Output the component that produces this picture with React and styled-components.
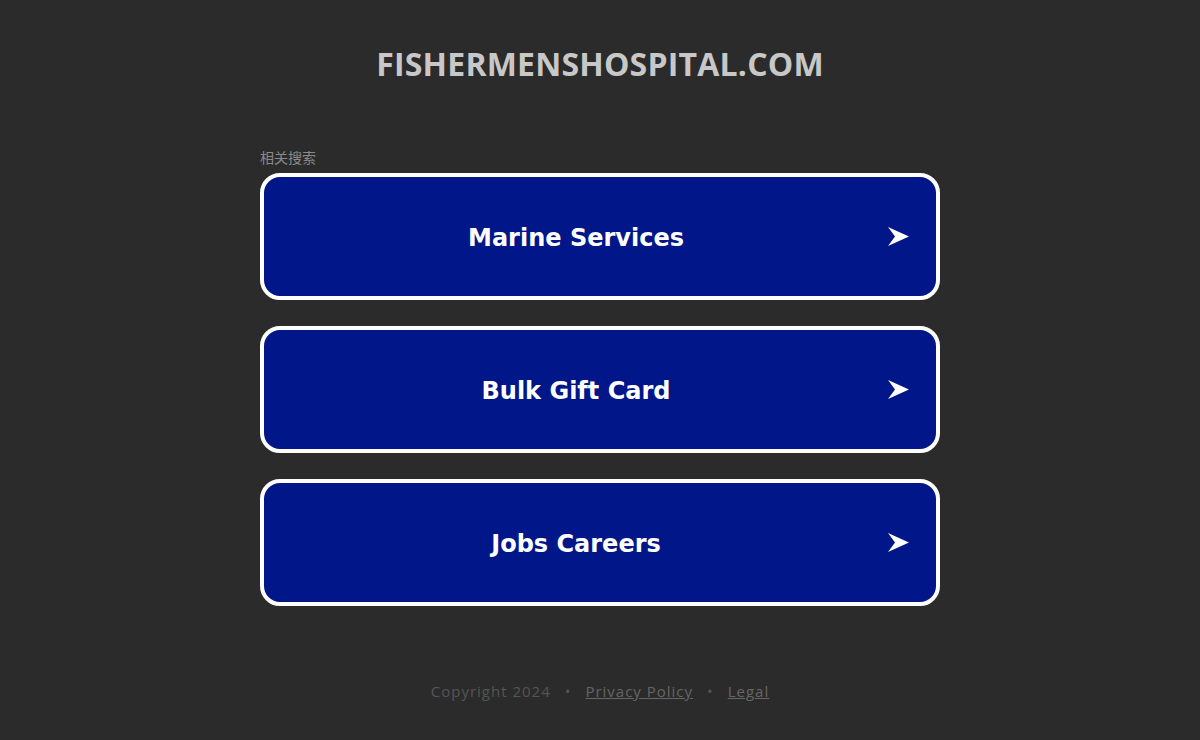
import React from "react";
import styled, { createGlobalStyle } from "styled-components";

const GlobalStyle = createGlobalStyle`
  html, body {
    margin: 0;
    padding: 0;
    background: #2b2b2b;
  }
`;

const Page = styled.div`
  width: 1200px;
  height: 740px;
  display: flex;
  flex-direction: column;
  align-items: center;
  box-sizing: border-box;
  padding-top: 43px;
`;

const Title = styled.h1`
  margin: 0;
  font-family: "Open Sans", sans-serif;
  font-weight: 700;
  font-size: 32px;
  line-height: 42px;
  color: #c8c8c8;
  letter-spacing: 0.2px;
`;

const Searches = styled.div`
  width: 680px;
  margin-top: 65px;
  display: flex;
  flex-direction: column;
`;

const Label = styled.div`
  font-family: "Liberation Sans", "Noto Sans CJK SC", sans-serif;
  font-size: 14px;
  line-height: 17px;
  color: #8a8a8a;
  margin-bottom: 6px;
`;

const Card = styled.a`
  display: flex;
  align-items: center;
  height: 127px;
  box-sizing: border-box;
  border: 4px solid #fff;
  border-radius: 20px;
  background: #011689;
  margin-bottom: 26px;
  padding-right: 26px;
  text-decoration: none;
  cursor: pointer;
`;

const CardText = styled.span`
  flex: 1;
  text-align: center;
  font-family: "DejaVu Sans", Verdana, sans-serif;
  font-weight: 700;
  font-size: 24px;
  line-height: 30px;
  padding-top: 2px;
  color: #fff;
`;

const Arrow = () => (
  <svg width="22" height="20" viewBox="0 0 22 20">
    <polygon points="0,0 21,9.5 0,19 7,9.5" fill="#fff" />
  </svg>
);

const Footer = styled.footer`
  margin-top: 49px;
  font-family: "Open Sans", sans-serif;
  font-size: 15px;
  letter-spacing: 1px;
  color: #555;
  display: flex;
  gap: 14px;
`;

const FooterLink = styled.a`
  color: #666;
  text-decoration: underline;
`;

const items = ["Marine Services", "Bulk Gift Card", "Jobs Careers"];

export default function App() {
  return (
    <>
      <GlobalStyle />
      <Page>
        <Title>FISHERMENSHOSPITAL.COM</Title>
        <Searches>
          <Label>相关搜索</Label>
          {items.map((item) => (
            <Card key={item}>
              <CardText>{item}</CardText>
              <Arrow />
            </Card>
          ))}
        </Searches>
        <Footer>
          <span>Copyright 2024</span>
          <span>•</span>
          <FooterLink>Privacy Policy</FooterLink>
          <span>•</span>
          <FooterLink>Legal</FooterLink>
        </Footer>
      </Page>
    </>
  );
}
